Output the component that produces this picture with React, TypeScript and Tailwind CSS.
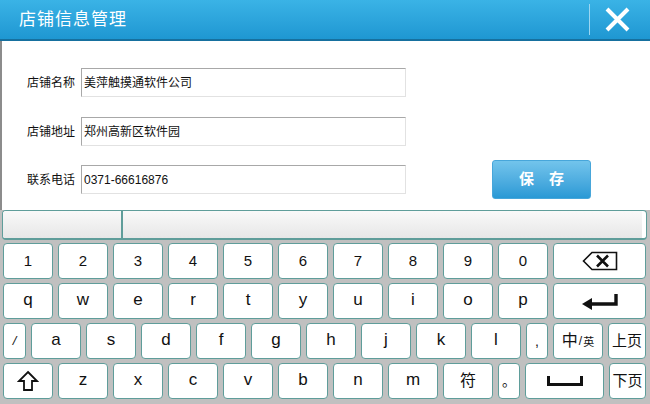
import React from 'react';

const font = { fontFamily: '"Liberation Sans", "Noto Sans CJK SC", sans-serif' };

const Key: React.FC<{ w: string; children?: React.ReactNode; className?: string }> = ({ w, children, className }) => (
  <div
    className={`${w} h-[36px] shrink-0 bg-white border-[1.5px] border-[#5f9d9a] rounded-[4px] flex items-center justify-center text-[#111] ${className ?? ''}`}
  >
    {children}
  </div>
);

const BackspaceIcon = () => (
  <svg width="36" height="20" viewBox="0 0 36 20">
    <path d="M1.5 10 L10 1.5 H34.5 V18.5 H10 Z" fill="none" stroke="#111" strokeWidth="1.6" strokeLinejoin="miter" />
    <path d="M15 4.5 L26 15.5 M26 4.5 L15 15.5" stroke="#111" strokeWidth="2.6" />
  </svg>
);

const EnterIcon = () => (
  <svg width="38" height="18" viewBox="0 0 38 18">
    <path d="M1 12 L11 6 V18 Z" fill="#111" />
    <path d="M10 12 H35 V2" fill="none" stroke="#111" strokeWidth="3.4" />
  </svg>
);

const ShiftIcon = () => (
  <svg width="22" height="22" viewBox="0 0 22 22">
    <path d="M11 2 L20 11 H15 V20 H7 V11 H2 Z" fill="none" stroke="#111" strokeWidth="1.8" strokeLinejoin="miter" />
  </svg>
);

const SpaceIcon = () => (
  <svg width="36" height="12" viewBox="0 0 36 12">
    <path d="M1.5 1 V9.5 H34.5 V1" fill="none" stroke="#111" strokeWidth="3" />
  </svg>
);

const App: React.FC = () => {
  const row1 = ['1', '2', '3', '4', '5', '6', '7', '8', '9', '0'];
  const row2 = ['q', 'w', 'e', 'r', 't', 'y', 'u', 'i', 'o', 'p'];
  const row3 = ['a', 's', 'd', 'f', 'g', 'h', 'j', 'k', 'l'];
  const row4 = ['z', 'x', 'c', 'v', 'b', 'n', 'm'];

  return (
    <div className="w-[650px] h-[404px] overflow-hidden flex flex-col bg-white" style={font}>
      {/* title bar */}
      <div className="h-[41px] shrink-0 flex items-center bg-gradient-to-b from-[#3ab3e6] to-[#1e97d2] border-b-2 border-[#16709f]">
        <span className="ml-[19px] text-white text-[17px] tracking-[1px]">店铺信息管理</span>
        <div className="ml-auto h-[31px] w-px bg-[#9bd6f2] mr-[14px]" />
        <svg width="27" height="25" viewBox="0 0 27 25" className="mr-[19px]">
          <path d="M3 2 L24 23 M24 2 L3 23" stroke="#fff" strokeWidth="4" />
        </svg>
      </div>

      {/* form */}
      <div className="h-[169px] shrink-0 border-l-2 border-[#8c8c8c] pl-[25px] pt-[27px] text-[12px] text-[#111]">
        <div className="flex items-center h-[29px]">
          <span className="w-[54px]">店铺名称</span>
          <div className="w-[325px] h-[29px] border border-t-[#a8a8a8] border-l-[#a8a8a8] border-r-[#e2e2e2] border-b-[#e2e2e2] flex items-center pl-[2px]">
            美萍触摸通软件公司
          </div>
        </div>
        <div className="flex items-center h-[29px] mt-[20px]">
          <span className="w-[54px]">店铺地址</span>
          <div className="w-[325px] h-[29px] border border-t-[#a8a8a8] border-l-[#a8a8a8] border-r-[#e2e2e2] border-b-[#e2e2e2] flex items-center pl-[2px]">
            郑州高新区软件园
          </div>
        </div>
        <div className="flex items-center h-[29px] mt-[19px]">
          <span className="w-[54px]">联系电话</span>
          <div className="w-[325px] h-[29px] border border-t-[#a8a8a8] border-l-[#a8a8a8] border-r-[#e2e2e2] border-b-[#e2e2e2] flex items-center pl-[2px]">
            0371-66616876
          </div>
          <button className="ml-[86px] w-[99px] h-[39px] rounded-[3px] border border-[#47a6da] bg-gradient-to-b from-[#72c4ec] to-[#2899d5] text-white text-[15px] font-bold">
            保　存
          </button>
        </div>
      </div>

      {/* candidate bar */}
      <div className="h-[30px] shrink-0 bg-[#c0c0c0] flex">
        <div className="flex-1 ml-[2px] mr-[3px] rounded-[4px] border border-[#5f9d9a] border-b-2 bg-white flex overflow-hidden">
          <div className="w-[120px] bg-gradient-to-b from-[#f9f9f9] to-[#e7e7e7] border-r-2 border-[#5f9d9a]" />
          <div className="flex-1 bg-gradient-to-b from-[#f9f9f9] to-[#e7e7e7] mr-[4px]" />
        </div>
      </div>

      {/* keyboard */}
      <div className="flex-1 bg-[#c0c0c0] pl-[3px] pr-[4px] pt-[3px] flex flex-col gap-[4px] text-[16px]">
        <div className="flex gap-[5px]">
          {row1.map(k => (
            <Key key={k} w="w-[50px]" className="text-[15px]">{k}</Key>
          ))}
          <Key w="flex-1"><BackspaceIcon /></Key>
        </div>
        <div className="flex gap-[5px]">
          {row2.map(k => (
            <Key key={k} w="w-[50px]" className="text-[17px] pb-[2px]">{k}</Key>
          ))}
          <Key w="flex-1"><EnterIcon /></Key>
        </div>
        <div className="flex gap-[5px]">
          <Key w="w-[23px]" className="text-[13px] italic">/</Key>
          {row3.map(k => (
            <Key key={k} w="w-[50px]" className="text-[17px] pb-[2px]">{k}</Key>
          ))}
          <Key w="w-[22px]" className="text-[14px]">,</Key>
          <Key w="w-[50px]">
            <span className="text-[16px]">中</span>
            <span className="text-[12px] mx-[1px]">/</span>
            <span className="text-[11px] mt-[3px]">英</span>
          </Key>
          <Key w="flex-1" className="text-[15px]">上页</Key>
        </div>
        <div className="flex gap-[5px]">
          <Key w="w-[50px]"><ShiftIcon /></Key>
          {row4.map(k => (
            <Key key={k} w="w-[50px]" className="text-[17px] pb-[2px]">{k}</Key>
          ))}
          <Key w="w-[50px]" className="text-[16px]">符</Key>
          <Key w="w-[22px]" className="text-[14px]">。</Key>
          <Key w="w-[79px]"><SpaceIcon /></Key>
          <Key w="flex-1" className="text-[15px]">下页</Key>
        </div>
      </div>
    </div>
  );
};

export default App;
